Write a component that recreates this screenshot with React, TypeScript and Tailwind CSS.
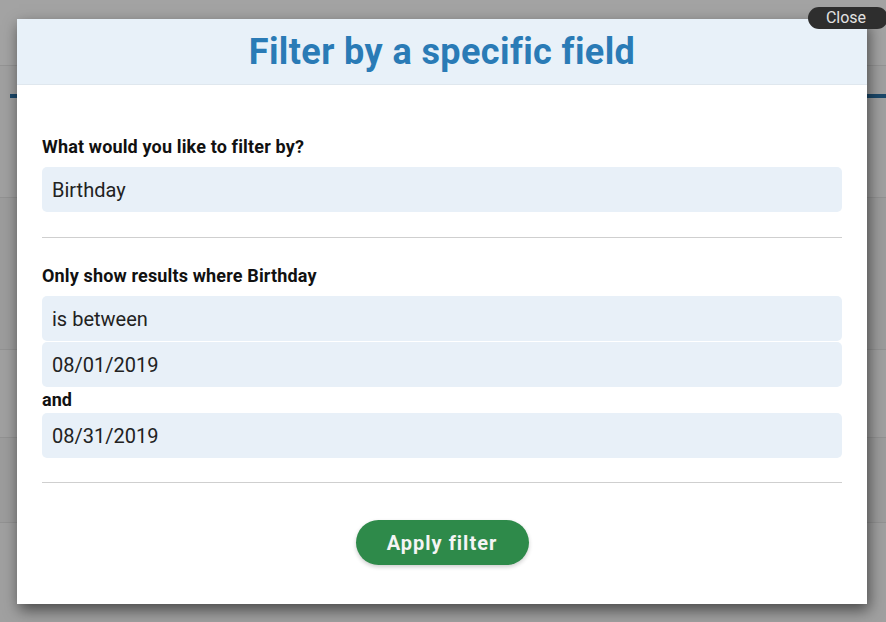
import { ChevronDown } from 'lucide-react';

const labelCls = 'block text-[18px] font-bold leading-[22px] tracking-[0.15px] text-[#111]';
const fieldCls =
    'flex h-[45px] w-full items-center rounded-[5px] bg-[#e8f0f8] px-[10px] text-[20px] text-[#222]';

export default function App() {
    return (
        <div className="relative h-[622px] w-[886px] overflow-hidden bg-[#f6f6f6] [font-family:Roboto,'Noto_Sans',sans-serif]">
            {/* Underlying page */}
            <div className="flex h-full flex-col">
                <div className="h-[66px] border-b border-[#e4e4e4] bg-[#fafafa]" />
                <div className="mt-[28px] ml-[10px] h-[4px] bg-[#2a6fa3]" />
                <div className="h-[100px] border-b border-[#e0e0e0]" />
                <div className="h-[152px] border-b border-[#e0e0e0] bg-[#f0f0f0]" />
                <div className="h-[88px] border-b border-[#e0e0e0]" />
                <div className="h-[85px] border-b border-[#e0e0e0] bg-[#f0f0f0]" />
                <div className="flex-1" />
            </div>

            {/* Overlay */}
            <div className="absolute inset-0 bg-black/35" />

            {/* Modal */}
            <div
                role="dialog"
                aria-modal="true"
                className="absolute top-[19px] left-[17px] flex h-[585px] w-[850px] flex-col bg-white shadow-[2px_6px_14px_rgba(0,0,0,0.55)]"
            >
                <header className="flex h-[66px] shrink-0 items-center justify-center border-b border-[#dfe7ee] bg-[#e8f1f9]">
                    <h1 className="text-[36px] font-bold leading-none tracking-[0.4px] text-[#2a7bb6]">
                        Filter by a specific field
                    </h1>
                </header>

                <div className="flex flex-1 flex-col px-[25px] pt-[51px]">
                    <label className={labelCls}>What would you like to filter by?</label>
                    <div className={`${fieldCls} mt-[9px]`}>Birthday</div>

                    <hr className="mt-[25px] border-[#cfcfcf]" />

                    <label className={`${labelCls} mt-[27px]`}>Only show results where Birthday</label>
                    <div className={`${fieldCls} mt-[9px] h-[44px] justify-between`}>
                        <span>is between</span>
                        <ChevronDown className="hidden h-4 w-4" />
                    </div>
                    <div className={`${fieldCls} mt-px h-[44px]`}>08/01/2019</div>
                    <span className="mt-[2px] text-[18px] leading-[22px] font-bold text-[#111]">and</span>
                    <div className={`${fieldCls} mt-[2px]`}>08/31/2019</div>

                    <hr className="mt-[24px] border-[#cfcfcf]" />

                    <div className="mt-[37px] flex justify-center">
                        <button
                            type="button"
                            className="h-[45px] w-[173px] rounded-full bg-[#2e8a4a] text-[20px] font-bold tracking-[1px] text-[#f4f4f4] shadow-[0_2px_4px_rgba(0,0,0,0.2)]"
                        >
                            Apply filter
                        </button>
                    </div>
                </div>
            </div>

            {/* Close button */}
            <button
                type="button"
                className="absolute top-[7px] left-[808px] flex h-[22px] w-[80px] items-center justify-center rounded-full bg-[#2e2e2e] pr-[4px] text-[16px] leading-none text-[#e2e2e2]"
            >
                Close
            </button>
        </div>
    );
}
